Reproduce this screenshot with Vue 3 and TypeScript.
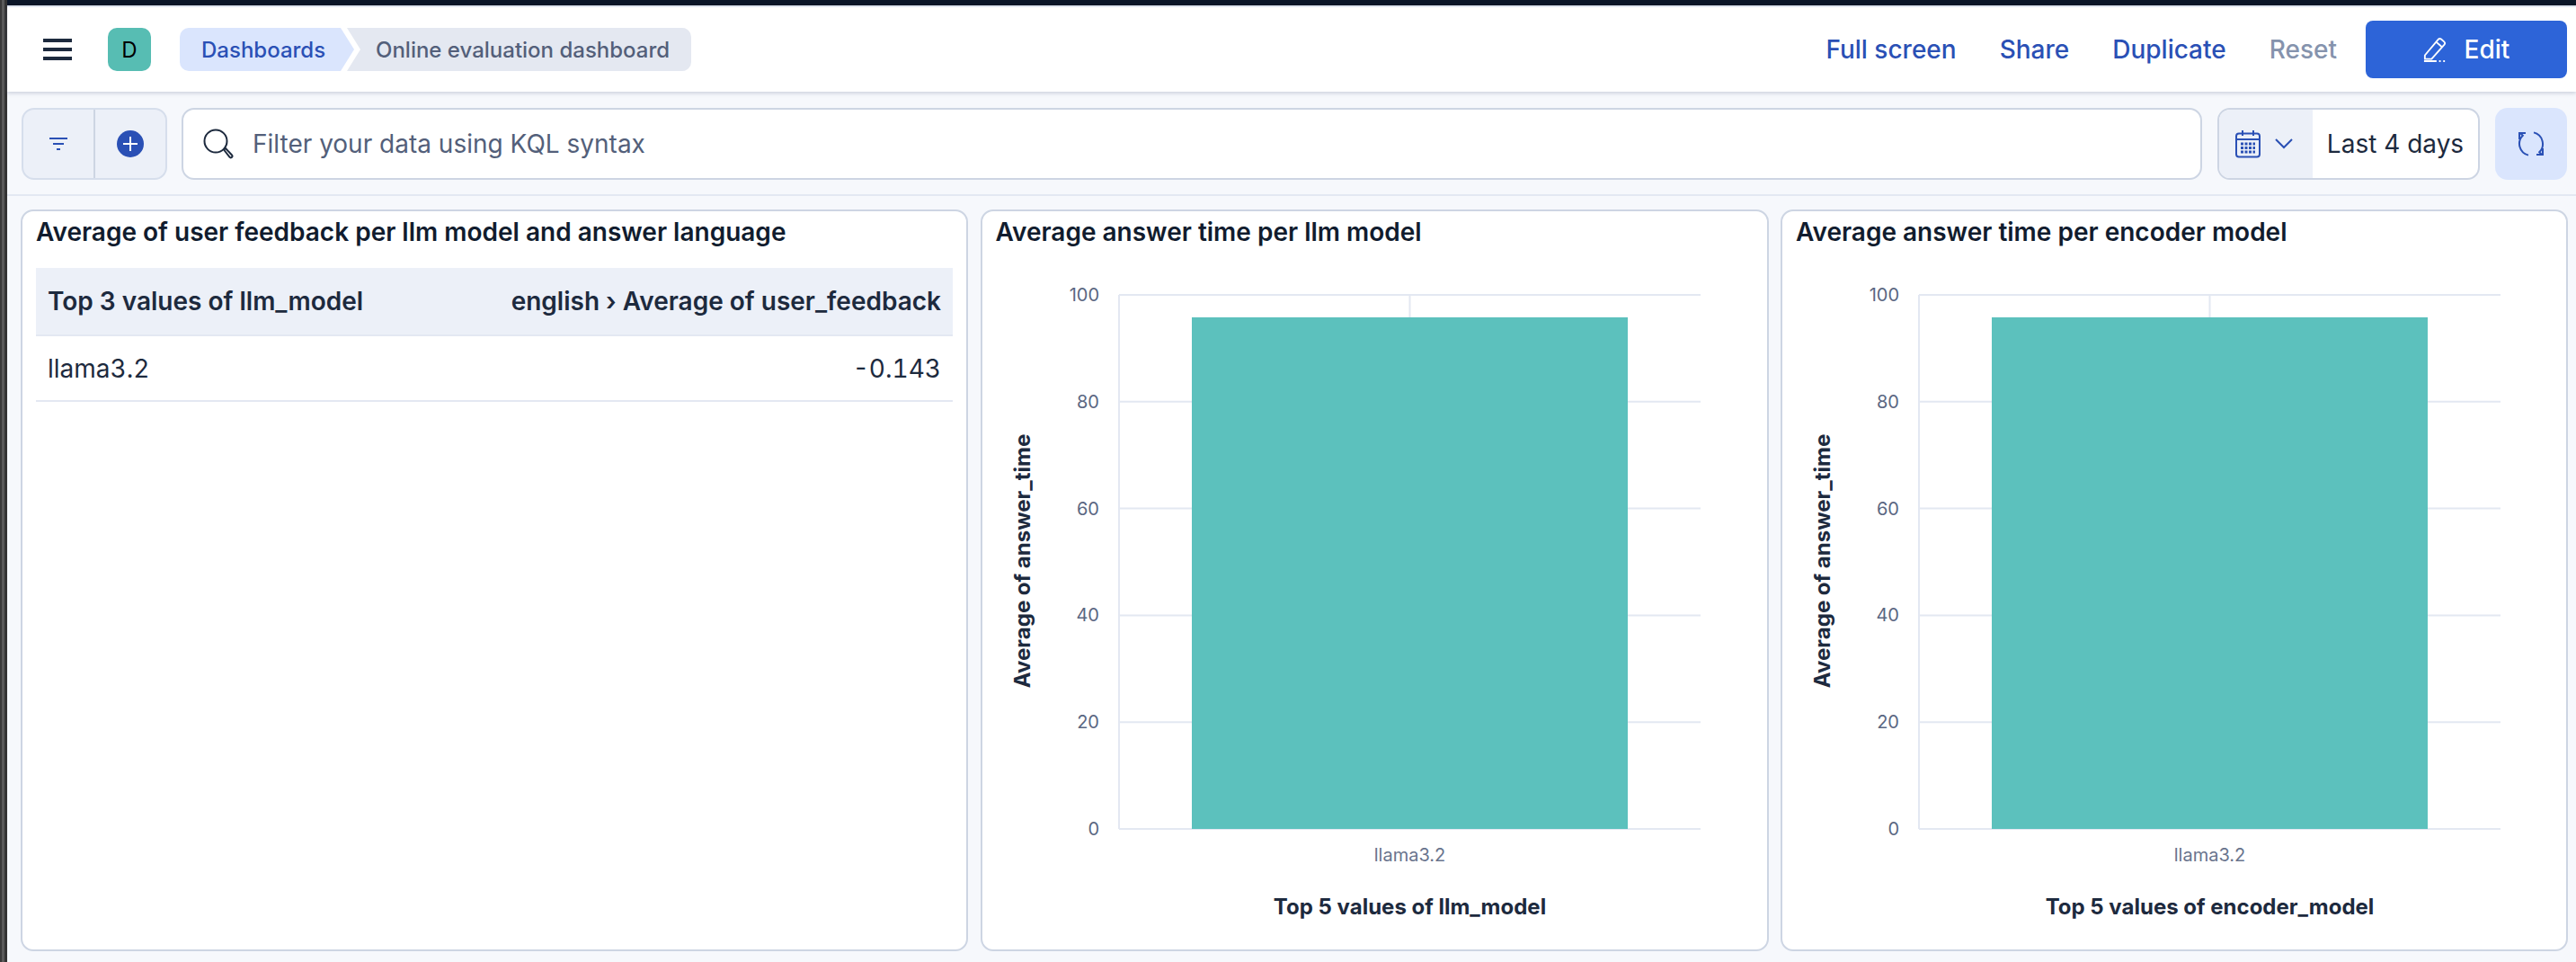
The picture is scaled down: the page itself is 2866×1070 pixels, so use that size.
<template>
  <div class="app">
    <div class="edge"></div>
    <div class="main">
      <div class="topline"></div>

      <header class="header">
        <svg class="menu" width="32" height="24" viewBox="0 0 32 24">
          <rect y="0" width="32" height="4" />
          <rect y="10" width="32" height="4" />
          <rect y="20" width="32" height="4" />
        </svg>
        <div class="avatar">D</div>
        <nav class="crumbs">
          <span class="crumb crumb-link">Dashboards</span>
          <span class="crumb crumb-current">Online evaluation dashboard</span>
        </nav>
        <div class="actions">
          <a class="action">Full screen</a>
          <a class="action">Share</a>
          <a class="action">Duplicate</a>
          <a class="action disabled">Reset</a>
          <button class="edit">
            <svg width="26" height="28" viewBox="0 0 28 30" fill="none" stroke="#fff" stroke-width="2">
              <path d="M2 22 L18 3 a2.5 2.5 0 0 1 3.5 -0.3 l3.5 3 a2.5 2.5 0 0 1 0.3 3.5 L10 26.5 H2 Z" stroke-linejoin="round" />
              <path d="M15.5 6 L22.5 12" />
              <path d="M1 29 H16 M19 29 H21 M24 29 H26" />
            </svg>
            <span>Edit</span>
          </button>
        </div>
      </header>

      <section class="toolbar">
        <div class="filter-group">
          <div class="filter-btn">
            <svg width="20" height="14" viewBox="0 0 20 14" fill="#2a50b5">
              <rect y="0" width="20" height="2" />
              <rect x="4" y="6" width="12" height="2" />
              <rect x="8" y="12" width="4" height="2" />
            </svg>
          </div>
          <div class="filter-btn">
            <svg width="30" height="30" viewBox="0 0 30 30">
              <circle cx="15" cy="15" r="15" fill="#2a50b5" />
              <path d="M15 7 V23 M7 15 H23" stroke="#fff" stroke-width="2" />
            </svg>
          </div>
        </div>
        <div class="search">
          <svg width="34" height="34" viewBox="0 0 34 34" fill="none" stroke="#1d2a3e" stroke-width="2">
            <circle cx="14" cy="14" r="12.5" />
            <path d="M23 23.5 L25 22 L32 29.5 a1.6 1.6 0 0 1 -2.6 2.2 Z" stroke-linejoin="round" />
          </svg>
          <span>Filter your data using KQL syntax</span>
        </div>
        <div class="date">
          <div class="date-icons">
            <svg width="28" height="31" viewBox="0 0 28 31" fill="none" stroke="#2a50b5" stroke-width="2">
              <rect x="1" y="3.5" width="26" height="26" rx="3" />
              <path d="M1 10 H27 M8 0 V6 M20 0 V6" />
              <path d="M6 15 h16 M6 19.5 h16 M6 24 h16" stroke-width="3" stroke-dasharray="3 1.5" />
            </svg>
            <svg width="20" height="12" viewBox="0 0 20 12" fill="none" stroke="#2a50b5" stroke-width="2">
              <path d="M1 1 L10 10 L19 1" />
            </svg>
          </div>
          <div class="date-value">Last 4 days</div>
        </div>
        <button class="refresh">
          <svg width="30" height="30" viewBox="0 0 30 30" fill="none" stroke="#2a50b5" stroke-width="2">
            <path d="M12 27.6 A13 13 0 0 1 5.8 5.8 L3 3" />
            <path d="M18 2.4 A13 13 0 0 1 24.2 24.2 L27 27" />
            <path d="M2 10 V3 H9" />
            <path d="M28 20 V27 H21" />
          </svg>
        </button>
      </section>

      <section class="panels">
        <article class="panel panel-table">
          <h2 class="panel-title">Average of user feedback per llm model and answer language</h2>
          <table class="data-table">
            <thead>
              <tr>
                <th>Top 3 values of llm_model</th>
                <th class="num">english › Average of user_feedback</th>
              </tr>
            </thead>
            <tbody>
              <tr v-for="row in rows" :key="row.model">
                <td>{{ row.model }}</td>
                <td class="num">{{ row.value }}</td>
              </tr>
            </tbody>
          </table>
        </article>

        <article v-for="chart in charts" :key="chart.title" class="panel">
          <h2 class="panel-title">{{ chart.title }}</h2>
          <svg class="chart" :width="chart.width" height="790" :viewBox="`0 0 ${chart.width} 790`">
            <g v-for="t in ticks" :key="t">
              <line :x1="axisX" :x2="axisX + 647" :y1="yOf(t)" :y2="yOf(t)" class="grid" />
              <text :x="axisX - 22" :y="yOf(t) + 7" text-anchor="end" class="tick">{{ t }}</text>
            </g>
            <line :x1="axisX" :x2="axisX" :y1="yOf(100)" :y2="yOf(0)" class="grid" />
            <line :x1="axisX + 323.5" :x2="axisX + 323.5" :y1="yOf(100)" :y2="yOf(0)" class="grid" />
            <rect :x="axisX + 81" :y="yOf(barValue)" width="485" :height="yOf(0) - yOf(barValue)" fill="#5cc1bd" />
            <text :x="axisX + 323.5" y="717" text-anchor="middle" class="tick tick-x">llama3.2</text>
            <text :x="axisX + 323.5" y="776" text-anchor="middle" class="axis-title">{{ chart.xTitle }}</text>
            <text
              text-anchor="middle"
              class="axis-title"
              :transform="`translate(${axisX - 99} 383) rotate(-90)`"
            >Average of answer_time</text>
          </svg>
        </article>
      </section>
    </div>
  </div>
</template>

<script setup lang="ts">
interface Row {
  model: string
  value: string
}

interface Chart {
  title: string
  xTitle: string
  width: number
}

const rows: Row[] = [{ model: 'llama3.2', value: '-0.143' }]

const charts: Chart[] = [
  { title: 'Average answer time per llm model', xTitle: 'Top 5 values of llm_model', width: 873 },
  { title: 'Average answer time per encoder model', xTitle: 'Top 5 values of encoder_model', width: 872 }
]

const ticks = [100, 80, 60, 40, 20, 0]
const barValue = 95.8
const axisX = 152

// svg y of a value, the axis runs from 100 at the top to 0
const yOf = (v: number) => 87 + (100 - v) * 5.94
</script>

<style>
html,
body {
  margin: 0;
  background: #f6f8fc;
}
</style>

<style scoped>
.app {
  display: flex;
  width: 2866px;
  height: 1070px;
  overflow: hidden;
  font-family: Inter, "Liberation Sans", sans-serif;
  color: #1d2a3e;
}

.edge {
  width: 8px;
  flex: none;
  background: linear-gradient(90deg, #3a3a3a 0 2px, #5a5a5a 2px 5px, #333 5px);
}

.main {
  flex: 1;
  display: flex;
  flex-direction: column;
  min-width: 0;
}

.topline {
  height: 6px;
  flex: none;
  background: #0b1628;
  border-bottom: 2px solid #e3e8f2;
}

.header {
  height: 94px;
  flex: none;
  display: flex;
  align-items: center;
  padding: 0 10px 0 40px;
  background: #fff;
  box-shadow: 0 2px 4px rgba(90, 105, 140, 0.25);
  position: relative;
}

.menu {
  fill: #1d2a3e;
}

.avatar {
  width: 48px;
  height: 48px;
  margin-left: 40px;
  border-radius: 10px;
  background: #57bdb3;
  color: #000;
  font-size: 24px;
  display: flex;
  align-items: center;
  justify-content: center;
}

.crumbs {
  display: flex;
  margin-left: 32px;
  height: 48px;
}

.crumb {
  display: flex;
  align-items: center;
  font-size: 24px;
  font-weight: 500;
}

.crumb-link {
  width: 194px;
  padding-left: 24px;
  box-sizing: border-box;
  background: #dae5fd;
  color: #2a50b5;
  border-radius: 10px 0 0 10px;
  clip-path: polygon(0 0, 179px 0, 194px 50%, 179px 100%, 0 100%);
}

.crumb-current {
  width: 383px;
  margin-left: -8px;
  padding-left: 32px;
  box-sizing: border-box;
  background: #e4e8f1;
  color: #535f7a;
  border-radius: 0 10px 10px 0;
  clip-path: polygon(0 0, 100% 0, 100% 100%, 0 100%, 15px 50%);
}

.actions {
  margin-left: auto;
  display: flex;
  align-items: center;
  gap: 48px;
}

.action {
  font-size: 28px;
  font-weight: 500;
  color: #2a50b5;
}

.action.disabled {
  color: #8593ad;
}

.edit {
  width: 224px;
  height: 64px;
  margin-left: -16px;
  border: 0;
  border-radius: 8px;
  background: #2d64d8;
  color: #fff;
  font: 500 28px Inter, "Liberation Sans", sans-serif;
  display: flex;
  align-items: center;
  justify-content: center;
  gap: 20px;
}

.toolbar {
  height: 80px;
  flex: none;
  display: flex;
  align-items: center;
  padding: 18px 10px 16px 16px;
  border-bottom: 2px solid #e3e8f2;
}

.filter-group {
  width: 162px;
  height: 80px;
  box-sizing: border-box;
  display: flex;
  border: 2px solid #d6deec;
  border-radius: 14px;
  background: #ecf0f8;
}

.filter-btn {
  flex: 1;
  display: flex;
  align-items: center;
  justify-content: center;
}

.filter-btn + .filter-btn {
  border-left: 2px solid #cdd5e3;
}

.search {
  width: 2248px;
  height: 80px;
  box-sizing: border-box;
  margin-left: 16px;
  padding-left: 22px;
  display: flex;
  align-items: center;
  gap: 21px;
  background: #fff;
  border: 2px solid #cdd5e3;
  border-radius: 14px;
  font-size: 28px;
  color: #535f7a;
}

.date {
  width: 292px;
  height: 80px;
  box-sizing: border-box;
  margin-left: 17px;
  display: flex;
  background: #fff;
  border: 2px solid #cdd5e3;
  border-radius: 14px;
  overflow: hidden;
}

.date-icons {
  width: 104px;
  flex: none;
  display: flex;
  align-items: center;
  gap: 16px;
  padding-left: 18px;
  box-sizing: border-box;
  background: #ecf0f8;
}

.date-value {
  flex: 1;
  display: flex;
  align-items: center;
  justify-content: center;
  font-size: 28px;
}

.refresh {
  width: 80px;
  height: 80px;
  margin-left: 17px;
  border: 0;
  border-radius: 14px;
  background: #dae5fd;
  display: flex;
  align-items: center;
  justify-content: center;
  padding: 0;
}

.panels {
  display: grid;
  grid-template-columns: 1054px 877px 876px;
  column-gap: 13.5px;
  padding: 15px 0 0 15px;
}

.panel {
  box-sizing: border-box;
  height: 825px;
  background: #fff;
  border: 2px solid #cdd5e3;
  border-radius: 14px;
  padding: 6px 15px 0;
  overflow: hidden;
}

.panel-title {
  margin: 0;
  font-size: 28px;
  font-weight: 600;
  line-height: 34px;
  color: #111c2e;
}

.chart {
  display: block;
  margin-left: -15px;
  margin-top: -34px;
}

.grid {
  stroke: #e3e8f2;
  stroke-width: 2;
}

.tick {
  font-size: 20px;
  fill: #5a6782;
}

.tick-x {
  fill: #69748d;
}

.axis-title {
  font-size: 24px;
  font-weight: 700;
  fill: #1d2a3e;
}

.data-table {
  width: 100%;
  margin-top: 23px;
  border-collapse: collapse;
  font-size: 28px;
}

.data-table th {
  height: 75px;
  padding: 0 13px;
  background: #ecf0f8;
  border-bottom: 2px solid #e3e8f2;
  text-align: left;
  font-weight: 600;
  box-sizing: border-box;
}

.data-table td {
  height: 73px;
  padding: 0 13px;
  border-bottom: 2px solid #e3e8f2;
  box-sizing: border-box;
  font-variant-numeric: tabular-nums;
}

.data-table .num {
  text-align: right;
}
</style>
